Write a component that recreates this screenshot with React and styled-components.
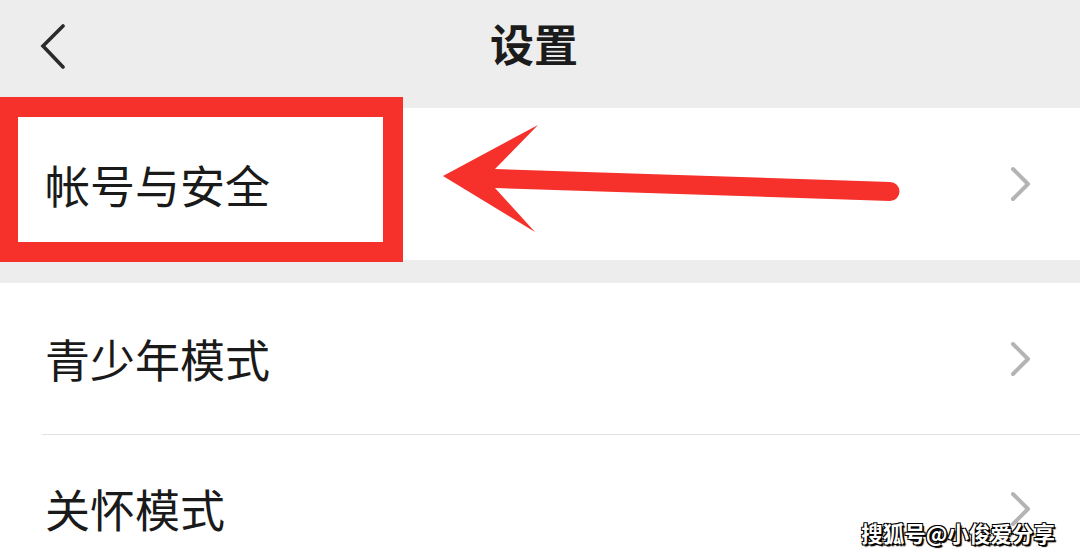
import React from "react";
import styled, { createGlobalStyle } from "styled-components";

const Global = createGlobalStyle`
  html, body { margin: 0; padding: 0; background: #ededed; }
  body { width: 1080px; height: 558px; overflow: hidden; font-family: "Noto Sans CJK SC", "Noto Sans", sans-serif; }
`;

const Page = styled.div`
  position: relative;
  width: 1080px;
  height: 558px;
  overflow: hidden;
  background: #ededed;
  display: flex;
  flex-direction: column;
`;

const Header = styled.div`
  height: 108px;
  flex: 0 0 108px;
  display: grid;
  grid-template-columns: 120px 1fr 120px;
  align-items: center;
  background: #ededed;
`;

const BackButton = styled.div`
  display: flex;
  align-items: center;
  padding-left: 40px;
  height: 100%;
  padding-bottom: 14px;
  box-sizing: border-box;
`;

const Title = styled.div`
  text-align: center;
  font-size: 44px;
  font-weight: 700;
  color: #1b1b1b;
  line-height: 1;
  padding-bottom: 22px;
  padding-right: 12px;
`;

const Section = styled.div`
  background: #ffffff;
  display: flex;
  flex-direction: column;
  margin-top: ${(p) => p.$gap || 0}px;
`;

const Row = styled.div`
  height: ${(p) => p.$h || 151}px;
  display: flex;
  align-items: center;
  justify-content: space-between;
  padding: 0 48px 0 45px;
  padding-bottom: ${(p) => p.$pb || 0}px;
  box-sizing: border-box;
`;

const Label = styled.span`
  font-size: 45px;
  color: #1a1a1a;
  line-height: 1;
`;

const Divider = styled.div`
  height: 1px;
  margin-left: 42px;
  background: #e2e2e2;
`;

const Highlight = styled.div`
  position: absolute;
  left: 0;
  top: 97px;
  width: 403px;
  height: 165px;
  box-sizing: border-box;
  border: 20px solid #f6302a;
  border-left-width: 18px;
  pointer-events: none;
`;

const ArrowLayer = styled.svg`
  position: absolute;
  left: 0;
  top: 0;
  pointer-events: none;
`;

const Watermark = styled.div`
  position: absolute;
  right: 25px;
  bottom: 10px;
  font-size: 21.5px;
  font-weight: 700;
  color: #ffffff;
  text-shadow: 1px 1px 0 #000, -1px -1px 0 #000, 1px -1px 0 #000, -1px 1px 0 #000, 2px 2px 1px #000;
`;

const Chevron = () => (
  <svg width="22" height="36" viewBox="0 0 22 36">
    <polyline points="3,3 18,18 3,33" fill="none" stroke="#b4b4b4" strokeWidth="4" strokeLinecap="round" strokeLinejoin="round" />
  </svg>
);

const Back = () => (
  <svg width="28" height="46" viewBox="0 0 28 46">
    <polyline points="23,2 3,22 23,43" fill="none" stroke="#2a2a2a" strokeWidth="3.6" strokeLinecap="round" strokeLinejoin="miter" />
  </svg>
);

export default function App() {
  return (
    <>
      <Global />
      <Page>
        <Header>
          <BackButton><Back /></BackButton>
          <Title>设置</Title>
          <div />
        </Header>
        <Section>
          <Row $h={152}>
            <Label>帐号与安全</Label>
            <Chevron />
          </Row>
        </Section>
        <Section $gap={23}>
          <Row $h={151}>
            <Label>青少年模式</Label>
            <Chevron />
          </Row>
          <Divider />
          <Row $h={151} $pb={4}>
            <Label>关怀模式</Label>
            <Chevron />
          </Row>
        </Section>
        <Highlight />
        <ArrowLayer width="1080" height="558" viewBox="0 0 1080 558">
          <path
            d="M443 176 L538 125 L495 169 L890 182 A9.5 9.5 0 0 1 890 201 L495 188 L535 232 Z"
            fill="#f6302a"
          />
        </ArrowLayer>
        <Watermark>搜狐号@小俊爱分享</Watermark>
      </Page>
    </>
  );
}
